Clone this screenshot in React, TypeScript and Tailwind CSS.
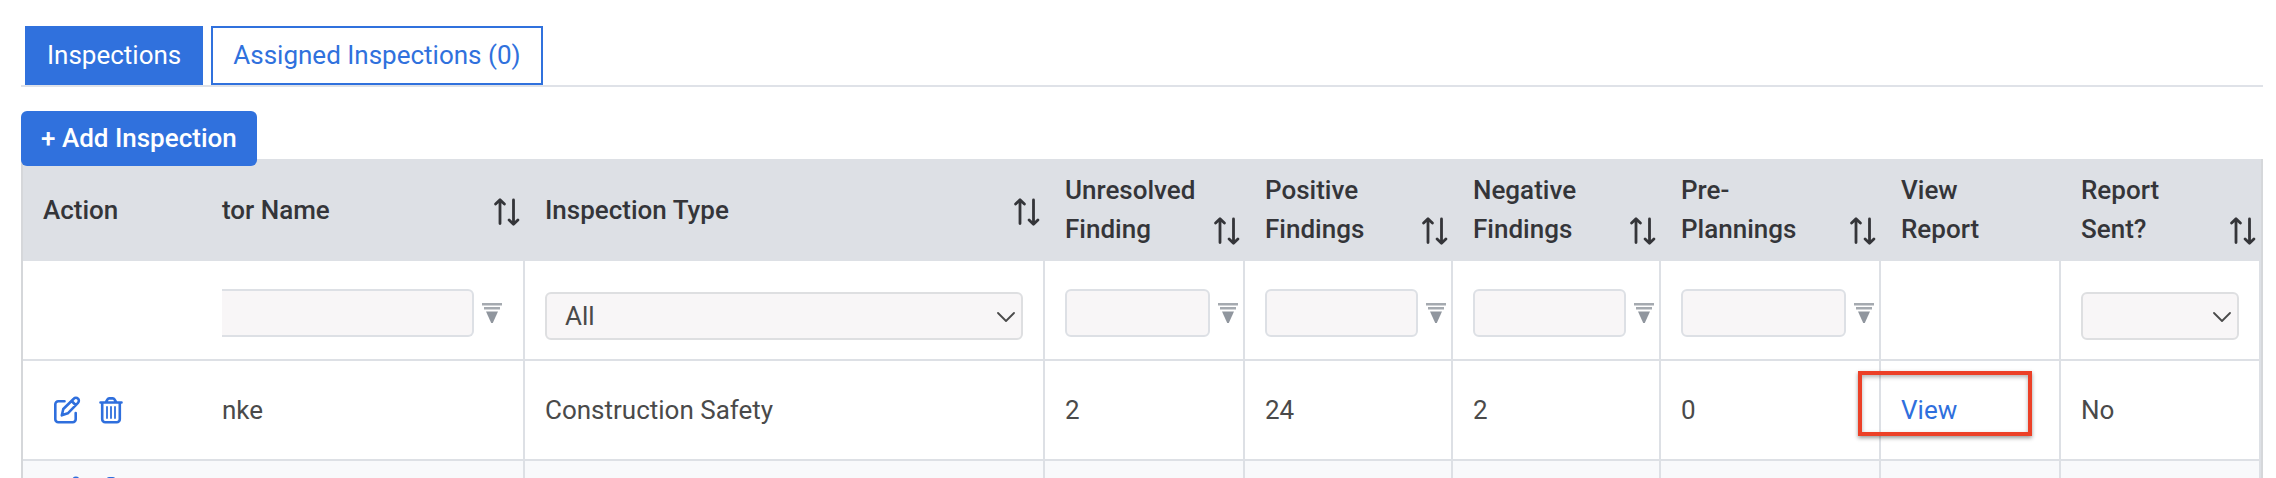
import type { ReactNode } from "react";

const SortIcon = () => (
	<svg
		className="h-9 w-[26px] shrink-0"
		viewBox="0 0 26 36"
		fill="none"
		stroke="currentColor"
		strokeWidth="2.8"
		strokeLinecap="round"
		strokeLinejoin="round"
	>
		<path d="M6 29.500V6M1.600 10 6 5.800l4.400 4.200M19.500 6v24M15.100 26l4.400 4.200 4.400-4.200" />
	</svg>
);

const FilterIcon = () => (
	<svg className="h-[22px] w-5 shrink-0" viewBox="0 0 20 22">
		<path d="M0 1h20v2.500H0zM2 5h16v2.500H2z" fill="#a5aab0" />
		<path d="M4 9.500h12L10.800 21H9.200z" fill="#90969e" />
	</svg>
);

const ChevronIcon = () => (
	<svg
		className="pointer-events-none absolute top-5 right-2 h-[10px] w-[18px]"
		viewBox="0 0 18 10"
		fill="none"
		stroke="#4a4a4a"
		strokeWidth="1.8"
		strokeLinecap="round"
		strokeLinejoin="round"
	>
		<path d="M1 1l8 8 8-8" />
	</svg>
);

const EditIcon = () => (
	<svg
		className="h-7 w-7"
		viewBox="0 0 28 28"
		fill="none"
		stroke="currentColor"
		strokeWidth="2.6"
		strokeLinecap="round"
		strokeLinejoin="round"
	>
		<path d="M11.500 5.300H5.300a3 3 0 0 0-3 3v15a3 3 0 0 0 3 3h14.400a3 3 0 0 0 3-3V17" />
		<path d="M8.800 19.300l1.500-6.300L20.800 2.700a2.900 2.900 0 0 1 4.200 0 2.900 2.900 0 0 1 0 4.100L14.800 17.300zM18.600 5l4 4" />
	</svg>
);

const TrashIcon = () => (
	<svg
		className="h-7 w-6"
		viewBox="0 0 24 28"
		fill="none"
		stroke="currentColor"
		strokeWidth="2.6"
		strokeLinecap="round"
		strokeLinejoin="round"
	>
		<path d="M1.500 6.500h21M7 6l1.500-2.600a2 2 0 0 1 1.700-1h3.600a2 2 0 0 1 1.700 1L17 6M3.200 6.500v16.800a3 3 0 0 0 3 3h11.600a3 3 0 0 0 3-3V6.500" />
		<path d="M8 11v11M12 11v11M16 11v11" strokeWidth="1.8" />
	</svg>
);

const Actions = () => (
	<div className="flex gap-[18px] pl-[10px] text-[#2f6fdd]">
		<button type="button" aria-label="Edit">
			<EditIcon />
		</button>
		<button type="button" aria-label="Delete">
			<TrashIcon />
		</button>
	</div>
);

const Head = ({
	children,
	sort = true,
	className = "pl-5",
}: {
	children: ReactNode;
	sort?: boolean;
	className?: string;
}) => (
	<th
		className={`${className} bg-[#dde0e5] py-3 pr-[5px] text-left font-medium text-[#343539]`}
	>
		<div className="flex items-end justify-between">
			<span>{children}</span>
			{sort && <SortIcon />}
		</div>
	</th>
);

const cell = "border-r-2 border-b-2 border-[#dde0e5]";

const TextFilter = ({ label }: { label: string }) => (
	<td className={`${cell} pt-7 pr-[5px] pl-5 align-top`}>
		<div className="flex items-center gap-2">
			<input
				aria-label={label}
				className="h-12 w-full min-w-0 rounded-md border-2 border-[#dde0e5] bg-[#f8f6f7] px-4"
			/>
			<FilterIcon />
		</div>
	</td>
);

const SelectFilter = ({ label, value }: { label: string; value: string }) => (
	<td className={`${cell} px-5 pt-[31px] align-top`}>
		<div className="relative">
			<select
				aria-label={label}
				className="block h-12 w-full appearance-none rounded-md border-2 border-[#dedfe1] bg-[#f8f6f7] pl-[18px]"
			>
				<option>{value}</option>
			</select>
			<ChevronIcon />
		</div>
	</td>
);

const App = () => {
	return (
		<div className="h-screen overflow-hidden bg-white pt-[26px] pr-[13px] pl-[21px] font-[Roboto,sans-serif] text-[26px] leading-[39px] text-[#4a4a4a]">
			<div className="flex gap-2 border-b-2 border-[#dfe2e8] pl-1">
				<button
					type="button"
					className="h-[59px] border-2 border-[#3071dd] bg-[#3071dd] px-5 text-white"
				>
					Inspections
				</button>
				<button
					type="button"
					className="h-[59px] border-2 border-[#3071dd] px-5 text-[#3071dd]"
				>
					Assigned Inspections (0)
				</button>
			</div>

			<button
				type="button"
				className="relative mt-6 -mb-[7px] block h-[55px] rounded-md bg-[#3071dd] px-5 font-medium text-white"
			>
				+ Add Inspection
			</button>

			<table className="w-full table-fixed border-separate border-spacing-0 border-x-2 border-[#d5d7da]">
				<colgroup>
					<col className="w-[199px]" />
					<col className="w-[303px]" />
					<col />
					<col className="w-[200px]" />
					<col className="w-[208px]" />
					<col className="w-[208px]" />
					<col className="w-[220px]" />
					<col className="w-[180px]" />
					<col className="w-[200px]" />
				</colgroup>
				<thead>
					<tr>
						<Head sort={false}>Action</Head>
						<Head className="pl-0">tor Name</Head>
						<Head>Inspection Type</Head>
						<Head>
							Unresolved
							<br />
							Finding
						</Head>
						<Head>
							Positive
							<br />
							Findings
						</Head>
						<Head>
							Negative
							<br />
							Findings
						</Head>
						<Head>
							Pre-
							<br />
							Plannings
						</Head>
						<Head sort={false}>
							View
							<br />
							Report
						</Head>
						<Head>
							Report
							<br />
							Sent?
						</Head>
					</tr>
				</thead>
				<tbody>
					<tr className="h-[100px]">
						<td className="border-b-2 border-[#dde0e5]" />
						<td className={`${cell} pt-7 pr-[21px] align-top`}>
							<div className="flex items-center gap-2">
								<input
									aria-label="Inspector Name"
									className="h-12 w-full min-w-0 rounded-r-md border-2 border-l-0 border-[#dde0e5] bg-[#f8f6f7] px-4"
								/>
								<FilterIcon />
							</div>
						</td>
						<SelectFilter label="Inspection Type" value="All" />
						<TextFilter label="Unresolved Finding" />
						<TextFilter label="Positive Findings" />
						<TextFilter label="Negative Findings" />
						<TextFilter label="Pre-Plannings" />
						<td className={cell} />
						<SelectFilter label="Report Sent?" value="" />
					</tr>
					<tr className="h-[100px]">
						<td className="border-b-2 border-[#dde0e5] pl-5">
							<Actions />
						</td>
						<td className={cell}>nke</td>
						<td className={`${cell} pl-5`}>Construction Safety</td>
						<td className={`${cell} pl-5`}>2</td>
						<td className={`${cell} pl-5`}>24</td>
						<td className={`${cell} pl-5`}>2</td>
						<td className={`${cell} pl-5`}>0</td>
						<td className={`${cell} relative pl-5`}>
							<a href="#view" className="text-[#2f6fdd]">
								View
							</a>
							<div className="pointer-events-none absolute top-[10px] -left-[23px] h-[65px] w-[174px] border-4 border-[#ec4027] shadow-[0_2px_4px_rgba(0,0,0,0.4),inset_0_2px_4px_rgba(0,0,0,0.3)]" />
						</td>
						<td className={`${cell} pl-5`}>No</td>
					</tr>
					<tr className="h-[60px] bg-[#f8f9fb]">
						<td className="border-b-2 border-[#dde0e5] pl-5">
							<Actions />
						</td>
						<td className={cell} />
						<td className={cell} />
						<td className={cell} />
						<td className={cell} />
						<td className={cell} />
						<td className={cell} />
						<td className={cell} />
						<td className={cell} />
					</tr>
				</tbody>
			</table>
		</div>
	);
};

export default App;
